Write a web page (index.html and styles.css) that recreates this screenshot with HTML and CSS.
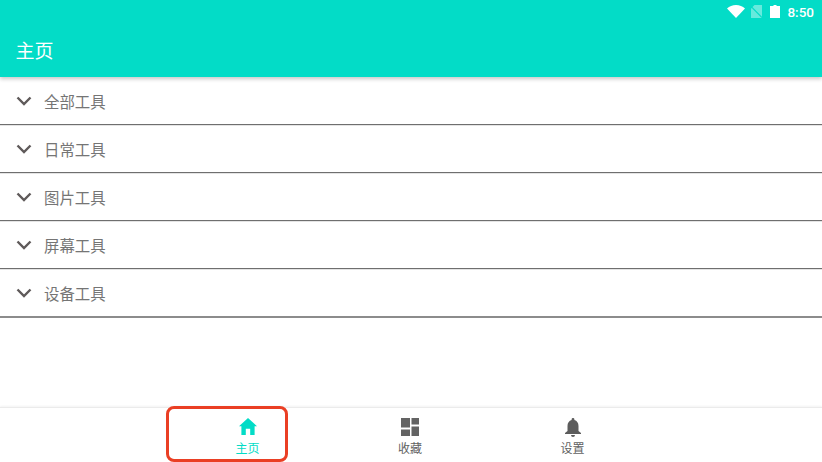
FILE: index.html
```html
<!DOCTYPE html>
<html lang="zh">
<head>
<meta charset="utf-8">
<title>主页</title>
<link rel="stylesheet" href="styles.css">
</head>
<body>
<div class="app">
  <header class="appbar">
    <div class="status">
      <svg class="st-wifi" width="18" height="13" viewBox="0 0 18 13"><path d="M0 3.400C2.400 1.300 5.500 0 9 0s6.600 1.300 9 3.400L9 13z" fill="#fff"/></svg>
      <svg class="st-sim" width="11" height="13" viewBox="0 0 11 13"><path d="M0 3.500V13h11V0H3.500z" fill="#fff" fill-opacity=".4"/><path d="M0 1.500L11 12.500" stroke="#03dcc7" stroke-width="1.200"/></svg>
      <svg class="st-bat" width="10" height="13" viewBox="0 0 10 13"><path d="M3.500 0h3v1H10v12H0V1h3.500z" fill="#fff"/></svg>
      <span class="time">8:50</span>
    </div>
    <h1 class="title">主页</h1>
  </header>
  <main class="list">
    <div class="row"><svg class="chev" width="16" height="10" viewBox="0 0 16 10"><path d="M1.500 1.500L8 8l6.500-6.500" fill="none" stroke="#5f5a5a" stroke-width="2.400"/></svg><span>全部工具</span></div>
    <div class="row"><svg class="chev" width="16" height="10" viewBox="0 0 16 10"><path d="M1.500 1.500L8 8l6.500-6.500" fill="none" stroke="#5f5a5a" stroke-width="2.400"/></svg><span>日常工具</span></div>
    <div class="row"><svg class="chev" width="16" height="10" viewBox="0 0 16 10"><path d="M1.500 1.500L8 8l6.500-6.500" fill="none" stroke="#5f5a5a" stroke-width="2.400"/></svg><span>图片工具</span></div>
    <div class="row"><svg class="chev" width="16" height="10" viewBox="0 0 16 10"><path d="M1.500 1.500L8 8l6.500-6.500" fill="none" stroke="#5f5a5a" stroke-width="2.400"/></svg><span>屏幕工具</span></div>
    <div class="row last"><svg class="chev" width="16" height="10" viewBox="0 0 16 10"><path d="M1.500 1.500L8 8l6.500-6.500" fill="none" stroke="#5f5a5a" stroke-width="2.400"/></svg><span>设备工具</span></div>
  </main>
  <nav class="nav">
    <div class="tab active">
      <svg class="ic-home" width="18" height="17" viewBox="0 0 18 17"><path d="M9 0L18 8.200h-2.400V17h-4.400v-6.200H6.800V17H2.400V8.200H0z" fill="#03dcc7"/></svg>
      <span>主页</span>
    </div>
    <div class="tab">
      <svg class="ic-grid" width="18" height="18" viewBox="0 0 18 18"><path d="M0 0h9v9.500H0zM10.500 0H18v6.500h-7.500zM0 11.500h9V18H0zM10.500 8.500H18V18h-7.500z" fill="#636363"/></svg>
      <span>收藏</span>
    </div>
    <div class="tab">
      <svg class="ic-bell" width="16" height="19" viewBox="0 0 16 19"><path d="M8 0a1.400 1.400 0 0 1 1.400 1.400v.7C12 2.800 13.500 5.100 13.500 8v5l2.500 2v1H0v-1l2.500-2V8c0-2.900 1.500-5.200 4.100-5.900v-.7A1.400 1.400 0 0 1 8 0zM6 17h4a2 2 0 0 1-4 0z" fill="#5c5c5c"/></svg>
      <span>设置</span>
    </div>
    <div class="mark"></div>
  </nav>
</div>
</body>
</html>
```
FILE: styles.css
```css
* { box-sizing: border-box; margin: 0; padding: 0; }
html, body { width: 822px; height: 462px; overflow: hidden; background: #fff; }
body { font-family: "Noto Sans CJK SC", "Roboto", sans-serif; }
.app { display: flex; flex-direction: column; width: 822px; height: 462px; }
.appbar { height: 77px; background: #03dcc7; display: flex; flex-direction: column; box-shadow: 0 2px 4px rgba(0,0,0,.22); position: relative; flex: none; }
.status { height: 24px; display: flex; align-items: center; justify-content: flex-end; padding-right: 8px; color: #fff; }
.st-wifi { margin-right: 6px; margin-top: -1px; }
.st-sim { margin-right: 8px; margin-top: -1px; }
.st-bat { margin-right: 7px; margin-top: -1px; }
.time { font: 500 13.500px "Roboto", sans-serif; line-height: 24px; }
.title { font-size: 19px; font-weight: 400; color: #fff; padding-left: 15.500px; line-height: 52px; }
.list { flex: 1; }
.row { height: 48px; display: flex; align-items: center; border-bottom: 1px solid #6f6f6f; box-shadow: 0 1px 0 #e4e4e4; padding-left: 16px; color: #757575; font-size: 15.400px; }
.row.last { height: 49px; border-bottom: 2px solid #8c8c8c; box-shadow: none; }
.row span { margin-left: 12px; }
.nav { height: 55px; flex: none; display: flex; justify-content: center; border-top: 1px solid #ebebeb; box-shadow: 0 -1px 2px rgba(0,0,0,.05); position: relative; padding-right: 2px; }
.tab { width: 162.500px; display: flex; flex-direction: column; align-items: center; justify-content: flex-end; height: 100%; padding-bottom: 6px; color: #616161; font-size: 12px; line-height: 17px; gap: 2px; }
.tab.active { color: #03dcc7; }
.ic-home { margin-bottom: 2px; }
.ic-grid { margin-bottom: 1px; }
.mark { position: absolute; left: 166px; top: -2px; width: 122px; height: 56px; border: 3.500px solid #ea3f24; border-radius: 8px; }
```
